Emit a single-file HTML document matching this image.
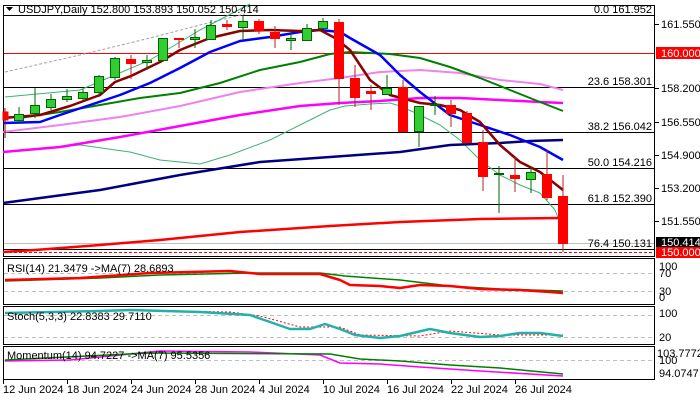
<!DOCTYPE html>
<html><head><meta charset="utf-8"><style>
html,body{margin:0;padding:0;background:#fff;}
svg{display:block;font-family:"Liberation Sans","DejaVu Sans",sans-serif;}
text{font-size:11px;fill:#000;}
</style></head><body>
<svg width="700" height="400" viewBox="0 0 700 400" xmlns="http://www.w3.org/2000/svg">
<rect width="700" height="400" fill="#fff"/>
<g fill="none" stroke="#000" stroke-width="1">
<rect x="3.5" y="5.5" width="651" height="251"/>
<rect x="3.5" y="258.5" width="651" height="46"/>
<rect x="3.5" y="306.5" width="651" height="38"/>
<rect x="3.5" y="346.5" width="651" height="33"/>
</g>
<g stroke="#000" stroke-width="1">
<line x1="4" y1="15.5" x2="654" y2="15.5"/>
<line x1="4" y1="87.5" x2="654" y2="87.5"/>
<line x1="4" y1="132.5" x2="654" y2="132.5"/>
<line x1="4" y1="168.5" x2="654" y2="168.5"/>
<line x1="4" y1="204.5" x2="654" y2="204.5"/>
<line x1="4" y1="249.5" x2="654" y2="249.5"/>
</g>
<line x1="4" y1="243.5" x2="654" y2="243.5" stroke="#c0c0c0"/>
<line x1="4" y1="53.5" x2="654" y2="53.5" stroke="#f00"/>
<line x1="4" y1="252.5" x2="654" y2="252.5" stroke="#f00" stroke-dasharray="3,2"/>
<g stroke="#c0c0c0" stroke-dasharray="4,3">
<line x1="4" y1="273.5" x2="654" y2="273.5"/>
<line x1="4" y1="291.5" x2="654" y2="291.5"/>
<line x1="4" y1="315.5" x2="654" y2="315.5"/>
<line x1="4" y1="337.5" x2="654" y2="337.5"/>
<line x1="4" y1="360.5" x2="654" y2="360.5"/>
</g>
<g fill="none" stroke-linejoin="round">
<polyline stroke="#a0a0b0" stroke-dasharray="3,2" points="5,72 80,55 150,38 200,25 245,14"/>
<polyline stroke="#3cb371" points="5,97 80,90 150,60 200,30 250,4"/>
<polyline stroke="#3cb371" points="5,152 80,145 130,152 160,160 200,164 230,155 270,140 300,125 330,110 345,106 370,104 390,103 400,106 420,115 440,125 460,140 480,160 500,175 520,185 540,193 555,210 563,230"/>
<polyline stroke="#000080" stroke-width="2.5" points="3,203 100,190 180,175 260,162 330,157 400,152 450,145 500,143 530,141 563,140"/>
<polyline stroke="#f00" stroke-width="2.5" points="3,252 35,250 100,245 160,240 240,232 330,226 400,222 480,219 560,218"/>
<polyline stroke="#ff00ff" stroke-width="2.5" points="3,152 60,147 120,137 180,126 240,115 300,106 340,103 380,101 420,98 460,98 500,100 540,102 563,103"/>
<polyline stroke="#ee82ee" stroke-width="2" points="3,132 60,125 120,117 180,106 240,92 300,83 340,78 380,72 420,70 460,73 500,80 540,84 563,90"/>
<polyline stroke="#008000" stroke-width="2" points="20,118 60,112 100,105 140,98 180,93 220,83 260,70 300,62 330,54 350,52 390,54 420,58 450,67 480,78 510,90 540,102 563,111"/>
<polyline stroke="#0000ff" stroke-width="2.5" points="3,123 40,122 60,115 90,105 120,95 150,83 180,68 210,52 240,41 270,37 300,32 320,30 340,32 350,38 380,55 400,75 420,92 450,115 480,125 510,135 540,147 563,160"/>
<polyline stroke="#8b0000" stroke-width="2.5" points="3,118 40,115 70,106 100,95 115,82 131,76 160,62 180,50 210,38 240,31 270,30 300,31 320,30 335,38 350,50 370,80 390,95 420,103 440,105 460,110 480,122 500,145 520,162 540,172 563,190"/>
</g>
<g stroke-width="1">
<g stroke="#8b0000"><line x1="5" y1="108" x2="5" y2="138"/></g>
<rect x="3" y="112" width="5" height="8" fill="#f00" stroke="#f00"/>
<g stroke="#006400">
<line x1="19" y1="107" x2="19" y2="124"/><line x1="35" y1="88" x2="35" y2="118"/><line x1="51" y1="94" x2="51" y2="110"/><line x1="67" y1="89" x2="67" y2="102"/><line x1="83" y1="89" x2="83" y2="101"/><line x1="99" y1="75" x2="99" y2="97"/><line x1="115" y1="57" x2="115" y2="80"/><line x1="147" y1="55" x2="147" y2="70"/><line x1="163" y1="38" x2="163" y2="62"/><line x1="195" y1="29" x2="195" y2="48"/><line x1="211" y1="20" x2="211" y2="40"/><line x1="243" y1="15" x2="243" y2="40"/><line x1="291" y1="32" x2="291" y2="50"/><line x1="307" y1="24" x2="307" y2="40"/><line x1="323" y1="18" x2="323" y2="28"/><line x1="387" y1="75" x2="387" y2="94"/><line x1="419" y1="106" x2="419" y2="147"/><line x1="435" y1="96" x2="435" y2="115"/><line x1="499" y1="166" x2="499" y2="213"/><line x1="531" y1="167" x2="531" y2="193"/>
</g>
<g fill="#32cd32" stroke="#006400">
<rect x="14.5" y="114.5" width="9" height="6"/><rect x="30.5" y="105.5" width="9" height="8"/><rect x="46.5" y="99.5" width="9" height="8"/><rect x="62.5" y="96.5" width="9" height="3"/><rect x="78.5" y="92.5" width="9" height="6"/><rect x="94.5" y="76.5" width="9" height="16"/><rect x="110.5" y="58.5" width="9" height="19"/><rect x="142.5" y="60.5" width="9" height="2"/><rect x="158.5" y="38.5" width="9" height="22"/><rect x="190.5" y="37.5" width="9" height="2"/><rect x="206.5" y="25.5" width="9" height="14"/><rect x="238.5" y="21.5" width="9" height="6"/><rect x="286.5" y="38.5" width="9" height="2"/><rect x="302.5" y="28.5" width="9" height="12"/><rect x="318.5" y="21.5" width="9" height="7"/><rect x="382.5" y="88.5" width="9" height="6"/><rect x="414.5" y="106.5" width="9" height="25"/><rect x="430.5" y="104.5" width="9" height="1"/><rect x="494.5" y="173.5" width="9" height="1"/><rect x="526.5" y="172.5" width="9" height="7"/>
</g>
<g stroke="#b22222">
<line x1="131" y1="55" x2="131" y2="79"/><line x1="179" y1="38" x2="179" y2="48"/><line x1="227" y1="20" x2="227" y2="30"/><line x1="275" y1="26" x2="275" y2="48"/><line x1="339" y1="19" x2="339" y2="105"/><line x1="355" y1="65" x2="355" y2="107"/><line x1="371" y1="85" x2="371" y2="110"/><line x1="403" y1="80" x2="403" y2="132"/><line x1="467" y1="111" x2="467" y2="142"/><line x1="483" y1="130" x2="483" y2="191"/><line x1="515" y1="157" x2="515" y2="192"/><line x1="547" y1="150" x2="547" y2="200"/><line x1="563" y1="175" x2="563" y2="252"/><line x1="259" y1="19" x2="259" y2="34"/><line x1="451" y1="100" x2="451" y2="127"/>
</g>
<g fill="#f00" stroke="#f00">
<rect x="126.5" y="59.5" width="9" height="4"/><rect x="174.5" y="38.5" width="9" height="1"/><rect x="222.5" y="24.5" width="9" height="2"/><rect x="254.5" y="21.5" width="9" height="9"/><rect x="270.5" y="32.5" width="9" height="6"/><rect x="334.5" y="22.5" width="9" height="56"/><rect x="350.5" y="78.5" width="9" height="19"/><rect x="366.5" y="91.5" width="9" height="2"/><rect x="398.5" y="87.5" width="9" height="44"/><rect x="446.5" y="105.5" width="9" height="8"/><rect x="462.5" y="113.5" width="9" height="29"/><rect x="478.5" y="142.5" width="9" height="34"/><rect x="510.5" y="175.5" width="9" height="3"/><rect x="542.5" y="174.5" width="9" height="23"/><rect x="558.5" y="196.5" width="9" height="47"/>
</g>
</g>
<g fill="none" stroke-linejoin="round">
<polyline stroke="#008000" stroke-width="1.5" points="5,281 100,278 160,275 250,273 320,273 345,276 400,280 450,286 500,289 563,291"/>
<polyline stroke="#f00" stroke-width="2.5" points="5,280 80,278 150,273 230,271 260,274 320,274 340,280 350,285 380,286 400,288 420,285 450,286 480,289 520,290 550,292 563,293"/>
<polyline stroke="#f00" stroke-dasharray="2,2" points="5,313 130,310 230,312 260,316 300,327 340,327 360,335 420,336 450,331 500,335 563,335"/>
<polyline stroke="#20b2aa" stroke-width="2.5" points="5,313 100,311 130,310 200,312 250,315 270,322 290,329 310,329 325,324 340,329 355,335 380,338 400,336 430,329 450,333 480,337 500,336 520,333 540,333 563,336"/>
<polyline stroke="#ff00ff" stroke-width="1.5" points="5,361 70,360 160,351 250,352 320,355 340,363 380,364 420,367 480,371 563,376"/>
<polyline stroke="#008000" stroke-width="1.5" points="5,360 150,353 330,354 360,359 400,361 450,365 500,368 563,374"/>
</g>
<path d="M6,7 L13,7 L9.5,11 Z" fill="#000"/>
<text x="18" y="13">USDJPY,Daily  152.800 153.893 150.052 150.414</text>
<g text-anchor="end">
<text x="652" y="13">0.0 161.952</text>
<text x="652" y="85">23.6 158.301</text>
<text x="652" y="130">38.2 156.042</text>
<text x="652" y="166">50.0 154.216</text>
<text x="652" y="202">61.8 152.390</text>
<text x="652" y="247">76.4 150.131</text>
</g>
<g stroke="#000">
<line x1="655" y1="24.5" x2="659" y2="24.5"/><line x1="655" y1="88.5" x2="659" y2="88.5"/><line x1="655" y1="122.5" x2="659" y2="122.5"/><line x1="655" y1="155.5" x2="659" y2="155.5"/><line x1="655" y1="188.5" x2="659" y2="188.5"/><line x1="655" y1="221.5" x2="659" y2="221.5"/>
</g>
<text x="661" y="28">161.550</text>
<rect x="656" y="47" width="44" height="12" fill="#f00"/>
<text x="661" y="57" style="fill:#fff">160.000</text>
<text x="661" y="92">158.200</text>
<text x="661" y="126">156.550</text>
<text x="661" y="159">154.900</text>
<text x="661" y="192">153.200</text>
<text x="661" y="225">151.550</text>
<rect x="656" y="237" width="44" height="11" fill="#000"/>
<text x="661" y="246" style="fill:#fff">150.414</text>
<rect x="656" y="247" width="44" height="11" fill="#f00"/>
<text x="661" y="256" style="fill:#fff">150.000</text>
<text x="659" y="270">100</text>
<text x="659" y="277">70</text>
<text x="659" y="295">30</text>
<text x="659" y="301">0</text>
<text x="659" y="317">100</text>
<text x="659" y="341">20</text>
<text x="657" y="357">103.7772</text>
<text x="659" y="364">100</text>
<text x="659" y="377">94.0747</text>
<text x="7" y="272">RSI(14) 21.3479  -&gt;MA(7) 28.6893</text>
<text x="7" y="320">Stoch(5,3,3) 22.8383 29.7110</text>
<text x="7" y="359">Momentum(14) 94.7227  -&gt;MA(7) 95.5356</text>
<g stroke="#000">
<line x1="3.5" y1="380" x2="3.5" y2="384"/><line x1="67.5" y1="380" x2="67.5" y2="384"/><line x1="131.5" y1="380" x2="131.5" y2="384"/><line x1="195.5" y1="380" x2="195.5" y2="384"/><line x1="259.5" y1="380" x2="259.5" y2="384"/><line x1="323.5" y1="380" x2="323.5" y2="384"/><line x1="387.5" y1="380" x2="387.5" y2="384"/><line x1="451.5" y1="380" x2="451.5" y2="384"/><line x1="515.5" y1="380" x2="515.5" y2="384"/>
</g>
<text x="3" y="393">12 Jun 2024</text>
<text x="67" y="393">18 Jun 2024</text>
<text x="131" y="393">24 Jun 2024</text>
<text x="195" y="393">28 Jun 2024</text>
<text x="259" y="393">4 Jul 2024</text>
<text x="323" y="393">10 Jul 2024</text>
<text x="387" y="393">16 Jul 2024</text>
<text x="451" y="393">22 Jul 2024</text>
<text x="515" y="393">26 Jul 2024</text>
</svg>
</body></html>
